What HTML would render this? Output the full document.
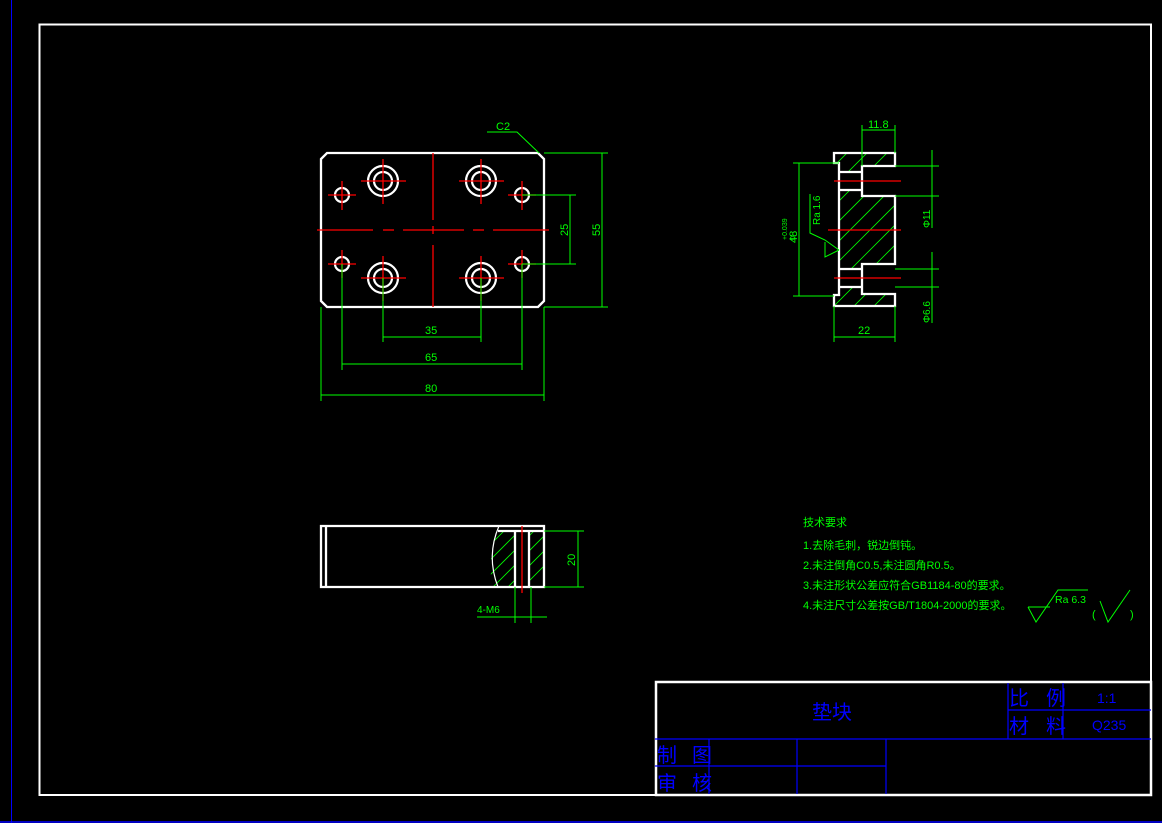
<!DOCTYPE html>
<html><head><meta charset="utf-8"><style>
html,body{margin:0;padding:0;background:#000;width:1162px;height:823px;overflow:hidden}
svg{display:block}
text{font-family:"Liberation Sans","Noto Sans CJK SC",sans-serif}
</style></head><body>
<svg width="1162" height="823" viewBox="0 0 1162 823" xmlns="http://www.w3.org/2000/svg">
<defs>
<clipPath id="c1"><path d="M839 163 H834 V153 H895 V166 H862 V196 H895 V264 H862 V294 H895 V306 H834 V295 H839 Z M839 172 V190 H862 V172 Z M839 269 V287 H862 V269 Z" clip-rule="evenodd"/></clipPath>
<clipPath id="c2"><path d="M496 531 H515 V587 H492 Q488 560 496 531 Z M529 531 H544 V587 H529 Z"/></clipPath>
</defs>
<rect width="1162" height="823" fill="#000"/>
<line x1="11.5" y1="0" x2="11.5" y2="823" stroke="#0000ff" stroke-width="1"/>
<line x1="0" y1="822" x2="1162" y2="822" stroke="#0000ff" stroke-width="1.5"/>
<rect x="39.5" y="24.5" width="1111.5" height="770.5" fill="none" stroke="#fff" stroke-width="2"/>
<rect x="656" y="682" width="495" height="113" fill="none" stroke="#fff" stroke-width="2.5"/>
<g stroke="#0000ff" stroke-width="1.2" fill="none">
<line x1="655" y1="739" x2="1151" y2="739"/>
<line x1="1008" y1="683" x2="1008" y2="739"/>
<line x1="1063" y1="683" x2="1063" y2="739"/>
<line x1="1008" y1="710" x2="1151" y2="710"/>
<line x1="709" y1="739" x2="709" y2="794"/>
<line x1="797" y1="739" x2="797" y2="794"/>
<line x1="886" y1="739" x2="886" y2="794"/>
<line x1="655" y1="766" x2="886" y2="766"/>
</g>
<g fill="#0000ff" font-size="20">
<text x="812" y="719">垫块</text>
<text x="1009" y="705">比</text><text x="1046" y="705">例</text>
<text x="1009" y="733">材</text><text x="1046" y="733">料</text>
<text x="657" y="762">制</text><text x="692" y="762">图</text>
<text x="657" y="790">审</text><text x="692" y="790">核</text>
<text x="1097" y="703" font-size="14">1:1</text>
<text x="1092" y="730" font-size="14">Q235</text>
</g>
<path d="M327 153 H538 L544 159 V301 L538 307 H327 L321 301 V159 Z" fill="none" stroke="#fff" stroke-width="2.3"/>
<g stroke="#fff" stroke-width="2.2" fill="none">
<circle cx="383" cy="181" r="15"/><circle cx="383" cy="181" r="9"/>
<circle cx="481" cy="181" r="15"/><circle cx="481" cy="181" r="9"/>
<circle cx="383" cy="278" r="15"/><circle cx="383" cy="278" r="9"/>
<circle cx="481" cy="278" r="15"/><circle cx="481" cy="278" r="9"/>
<circle cx="342" cy="195" r="7"/><circle cx="522" cy="195" r="7"/>
<circle cx="342" cy="264" r="7"/><circle cx="522" cy="264" r="7"/>
</g>
<g stroke="#ff0000" stroke-width="1.3">
<line x1="433" y1="153" x2="433" y2="220"/><line x1="433" y1="226" x2="433" y2="234"/><line x1="433" y1="245" x2="433" y2="307"/>
<line x1="317" y1="230" x2="373" y2="230"/><line x1="383" y1="230" x2="394" y2="230"/><line x1="403" y1="230" x2="464" y2="230"/><line x1="473" y1="230" x2="484" y2="230"/><line x1="493" y1="230" x2="549" y2="230"/>
<path d="M361 181H406M383 159V204M459 181H504M481 159V204M361 278H406M383 256V301M459 278H504M481 256V301M328 195H356M342 181V210M508 195H536M522 181V210M328 264H356M342 250V278M508 264H536M522 250V278" fill="none"/>
</g>
<g stroke="#00ff00" stroke-width="1" fill="none">
<path d="M487 132H517L539 153"/>
<path d="M544 153H608M544 307H608M602 153V307"/>
<path d="M522 195H576M522 264H576M570 195V264"/>
<path d="M383 278V342M481 278V342M383 337H481"/>
<path d="M342 264V370M522 264V370M342 364H522"/>
<path d="M321 307V401M544 307V401M321 395H544"/>
</g>
<g fill="#00ff00" font-size="11">
<text x="496" y="130">C2</text>
<text x="425" y="334">35</text>
<text x="425" y="361">65</text>
<text x="425" y="392">80</text>
<text transform="translate(568,236) rotate(-90)">25</text>
<text transform="translate(600,236) rotate(-90)">55</text>
</g>
<g clip-path="url(#c1)" stroke="#00ff00" stroke-width="0.8">
<path d="M820 340L920 240M820 320L920 220M820 300L920 200M820 280L920 180M820 260L920 160M820 240L920 140M820 220L920 120M820 200L920 100M820 180L920 80M820 160L920 60M820 360L920 260M820 380L920 280M820 400L920 300"/>
</g>
<path d="M839 163 H834 V153 H895 V166 H862 V196 H895 V264 H862 V294 H895 V306 H834 V295 H839 Z M839 172 V190 H862 V172 Z M839 269 V287 H862 V269 Z" fill="none" stroke="#fff" stroke-width="2.3"/>
<g stroke="#ff0000" stroke-width="1.3"><line x1="834" y1="181" x2="901" y2="181"/><line x1="828" y1="230" x2="901" y2="230"/><line x1="834" y1="278" x2="901" y2="278"/></g>
<g stroke="#00ff00" stroke-width="1" fill="none">
<path d="M862 125V166M895 125V153M862 130H895"/>
<path d="M834 306V342M895 306V342M834 337H895"/>
<path d="M793 163H839M793 296H834M799 163V296"/>
<path d="M895 166H939M895 196H939M932 150V228"/>
<path d="M895 269H939M895 287H939M932 252V323"/>
<path d="M810 194V233L825 240L839 250M825 242V257L839 250"/>
</g>
<g fill="#00ff00" font-size="11">
<text x="868" y="128">11.8</text>
<text x="858" y="334">22</text>
<text transform="translate(797,243) rotate(-90)">48</text>
<text transform="translate(787,240) rotate(-90)" font-size="7">+0.039</text>
<text transform="translate(795,240) rotate(-90)" font-size="7">0</text>
<text transform="translate(820,225) rotate(-90)" font-size="10">Ra 1.6</text>
<text transform="translate(930,228) rotate(-90)" font-size="10">Φ11</text>
<text transform="translate(930,323) rotate(-90)" font-size="10">Φ6.6</text>
</g>
<g clip-path="url(#c2)" stroke="#00ff00" stroke-width="0.8">
<path d="M480 600L560 520M480 585L560 505M480 570L560 490M480 555L560 475M480 540L560 460M480 615L560 535M480 630L560 550"/>
</g>
<g stroke="#fff" stroke-width="2.3" fill="none">
<path d="M321 526H544V587H321Z"/>
<line x1="326" y1="526" x2="326" y2="587"/>
<line x1="498" y1="531" x2="544" y2="531"/>
<line x1="515" y1="531" x2="515" y2="587"/>
<line x1="529" y1="531" x2="529" y2="587"/>
<path d="M499 526Q486 556 498 587" stroke-width="1.2"/>
</g>
<line x1="522" y1="526" x2="522" y2="593" stroke="#ff0000" stroke-width="1.3"/>
<g stroke="#00ff00" stroke-width="1" fill="none">
<path d="M544 531H584M544 587H584M578 531V587"/>
<path d="M515 587V623M531 587V623M477 617H547"/>
</g>
<g fill="#00ff00" font-size="11">
<text transform="translate(575,566) rotate(-90)">20</text>
<text x="477" y="613" font-size="10">4-M6</text>
</g>
<g fill="#00ff00" font-size="11">
<text x="803" y="526">技术要求</text>
<text x="803" y="549">1.去除毛刺，锐边倒钝。</text>
<text x="803" y="569">2.未注倒角C0.5,未注圆角R0.5。</text>
<text x="803" y="589">3.未注形状公差应符合GB1184-80的要求。</text>
<text x="803" y="609">4.未注尺寸公差按GB/T1804-2000的要求。</text>
<text x="1055" y="603" font-size="10.5">Ra 6.3</text>
<text x="1092" y="618">(</text><text x="1130" y="618">)</text>
</g>
<g stroke="#00ff00" stroke-width="1" fill="none">
<path d="M1028 607H1050M1028 607L1036 622L1058 590H1088"/>
<path d="M1100 601L1108 622L1130 590"/>
</g>
</svg>
</body></html>
